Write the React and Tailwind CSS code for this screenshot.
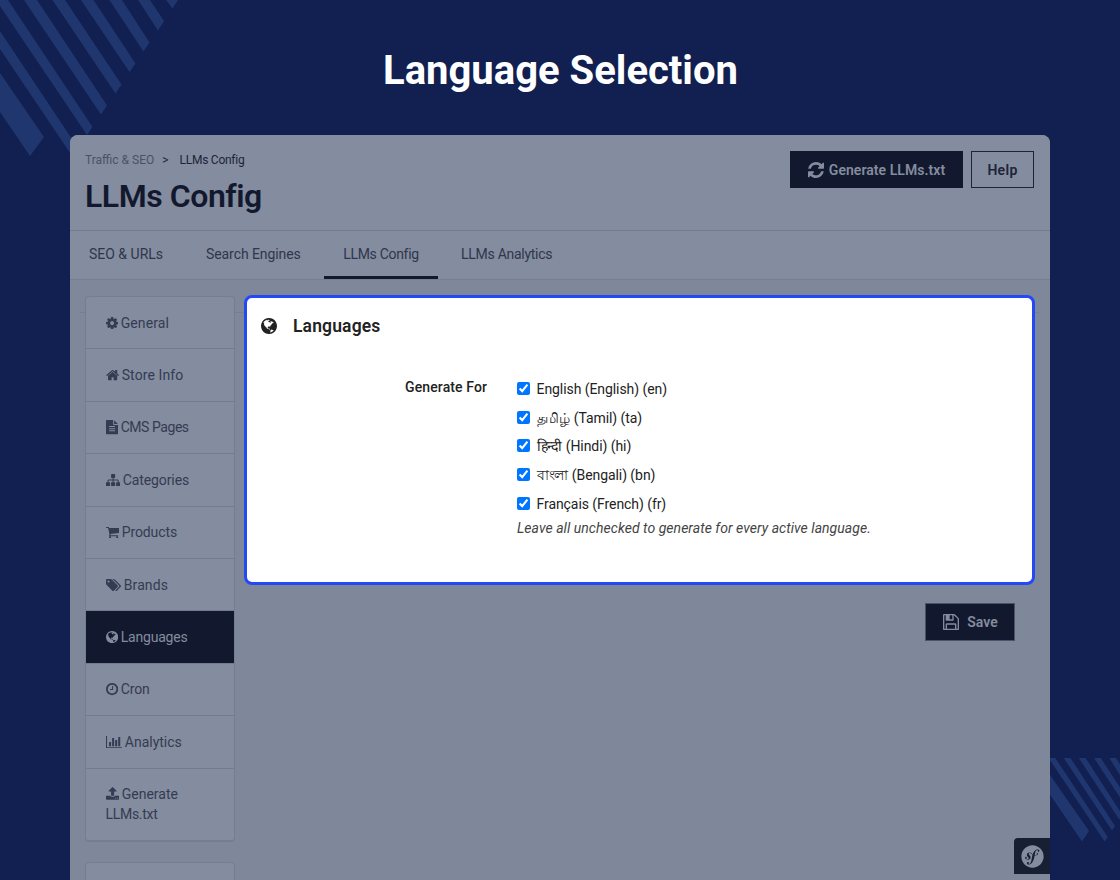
import { FaSymfony } from "react-icons/fa";

const icons = {
  cog: {
    box: [128, 128, 1536, 1536],
    d: "M1152 896q0-106-75-181t-181-75-181 75-75 181 75 181 181 75 181-75 75-181zm512-109v222q0 12-8 23t-20 13l-185 28q-19 54-39 91 35 50 107 138 10 12 10 25t-9 23q-27 37-99 108t-94 71q-12 0-26-9l-138-108q-44 23-91 38-16 136-29 186-7 28-36 28h-222q-14 0-24.5-8.5t-11.5-21.5l-28-184q-49-16-90-37l-141 107q-10 9-25 9-14 0-25-11-126-114-165-168-7-10-7-23 0-12 8-23 15-21 51-66.5t54-70.5q-27-50-41-99l-183-27q-13-2-21-12.5t-8-23.5v-222q0-12 8-23t19-13l186-28q14-46 39-92-40-57-107-138-10-12-10-24 0-10 9-23 26-36 98.5-107.5t94.5-71.5q13 0 26 10l138 107q44-23 91-38 16-136 29-186 7-28 36-28h222q14 0 24.5 8.5t11.5 21.5l28 184q49 16 90 37l142-107q9-9 24-9 13 0 25 10 129 119 165 170 7 8 7 22 0 12-8 23-15 21-51 66.5t-54 70.5q26 50 41 98l183 28q13 2 21 12.5t8 23.5z",
  },
  home: {
    box: [64, 128, 1664, 1536],
    d: "M1472 992v480q0 26-19 45t-45 19h-384v-384h-256v384h-384q-26 0-45-19t-19-45v-480q0-1 .5-3t.5-3l575-474 575 474q1 2 1 6zm223-69l-62 74q-8 9-21 11h-3q-13 0-21-7l-692-577-692 577q-12 8-24 7-13-2-21-11l-62-74q-8-10-7-23.5t11-21.5l719-599q32-26 76-26t76 26l244 204v-195q0-14 9-23t23-9h192q14 0 23 9t9 23v408l219 182q10 8 11 21.5t-7 23.5z",
  },
  file: {
    box: [128, 0, 1536, 1792],
    d: "M1596 476q14 14 28 36h-472v-472q22 14 36 28zm-476 164h544v1056q0 40-28 68t-68 28h-1344q-40 0-68-28t-28-68v-1600q0-40 28-68t68-28h800v544q0 40 28 68t68 28zm160 736v-64q0-14-9-23t-23-9h-704q-14 0-23 9t-9 23v64q0 14 9 23t23 9h704q14 0 23-9t9-23zm0-256v-64q0-14-9-23t-23-9h-704q-14 0-23 9t-9 23v64q0 14 9 23t23 9h704q14 0 23-9t9-23zm0-256v-64q0-14-9-23t-23-9h-704q-14 0-23 9t-9 23v64q0 14 9 23t23 9h704q14 0 23-9t9-23z",
  },
  sitemap: {
    box: [0, 128, 1792, 1536],
    d: "M1792 1248v320q0 40-28 68t-68 28h-320q-40 0-68-28t-28-68v-320q0-40 28-68t68-28h96v-192h-512v192h96q40 0 68 28t28 68v320q0 40-28 68t-68 28h-320q-40 0-68-28t-28-68v-320q0-40 28-68t68-28h96v-192h-512v192h96q40 0 68 28t28 68v320q0 40-28 68t-68 28h-320q-40 0-68-28t-28-68v-320q0-40 28-68t68-28h96v-192q0-52 38-90t90-38h512v-192h-96q-40 0-68-28t-28-68v-320q0-40 28-68t68-28h320q40 0 68 28t28 68v320q0 40-28 68t-68 28h-96v192h512q52 0 90 38t38 90v192h96q40 0 68 28t28 68z",
  },
  cart: {
    box: [64, 128, 1664, 1536],
    d: "M704 1536q0 52-38 90t-90 38-90-38-38-90 38-90 90-38 90 38 38 90zm896 0q0 52-38 90t-90 38-90-38-38-90 38-90 90-38 90 38 38 90zm128-1088v512q0 24-16.5 42.5t-40.5 21.5l-1044 122q13 60 13 70 0 16-24 64h920q26 0 45 19t19 45-19 45-45 19h-1024q-26 0-45-19t-19-45q0-11 8-31.5t16-36 21.5-40 15.5-29.5l-177-823h-204q-26 0-45-19t-19-45 19-45 45-19h256q16 0 28.5 6.5t19.5 15.5 13 24.5 8 26 5.5 29.5 4.5 26h1201q26 0 45 19t19 45z",
  },
  tags: {
    box: [0, 128, 1920, 1536],
    d: "M448 448q0-53-37.5-90.5t-90.5-37.5-90.5 37.5-37.5 90.5 37.5 90.5 90.5 37.5 90.5-37.5 37.5-90.5zm1067 576q0 53-37 90l-491 492q-39 37-91 37-53 0-90-37l-715-716q-38-37-64.5-101t-26.5-117v-416q0-52 38-90t90-38h416q53 0 117 26.5t102 64.5l715 714q37 39 37 91zm384 0q0 53-37 90l-491 492q-39 37-91 37-36 0-59-14t-53-45l470-470q37-37 37-90 0-52-37-91l-715-714q-38-38-102-64.5t-117-26.5h224q53 0 117 26.5t102 64.5l715 714q37 39 37 91z",
  },
  globe: {
    box: [128, 128, 1536, 1536],
    d: "M896 128q209 0 385.5 103t279.5 279.5 103 385.5-103 385.5-279.5 279.5-385.5 103-385.5-103-279.5-279.5-103-385.5 103-385.5 279.5-279.5 385.5-103zm274 521q-2 1-9.5 9.5t-13.5 9.5q2 0 4.5-5t5-11 3.5-7q6-7 22-15 14-6 52-12 34-8 51 11-2-2 9.5-13t14.5-12q3-2 15-4.5t15-7.5l2-22q-12 1-17.5-7t-6.5-21q0 2-6 8 0-7-4.5-8t-11.5 1-9 1q-10-3-15-7.5t-8-16.5-4-15q-2-5-9.5-11t-9.5-10q-1-2-2.5-5.5t-3-6.5-4-5.5-5.5-2.5-7 5-7.5 10-4.5 5q-3-2-6-1.5t-4.5 1-4.5 3-5 3.5q-3 2-8.5 3t-8.5 2q15-5-1-11-10-4-16-3 9-4 7.5-12t-8.5-14h5q-1-4-8.5-8.5t-17.5-8.5-13-6q-8-5-34-9.5t-33-.5q-5 6-4.5 10.5t4 14 3.5 12.5q1 6-5.5 13t-6.5 12q0 7 14 15.5t10 21.5q-3 8-16 16t-16 12q-5 8-1.5 18.5t10.5 16.5q2 2 1.5 4t-3.5 4.5-5.5 4-6.5 3.5l-3 2q-11 5-20.5-6t-13.5-26q-7-25-16-30-23-8-29 1-5-13-41-26-25-9-58-4 6-1 0-15-7-15-19-12 3-6 4-17.5t1-13.5q3-13 12-23 1-1 7-8.5t9.5-13.5.5-6q35 4 50-11 5-5 11.5-17t10.5-17q9-6 14-5.5t14.5 5.5 14.5 5q14 1 15.5-11t-7.5-20q12 1 3-17-4-7-8-9-12-4-27 5-8 4 2 8-1-1-9.5 10.5t-16.5 17.5-16-5q-1-1-5.5-13.5t-9.5-13.5q-8 0-16 15 3-8-11-15t-24-8q19-12-8-27-7-4-20.5-5t-19.5 4q-5 7-5.5 11.5t5 8 10.5 5.5 11.5 4 8.5 3q14 10 8 14-2 1-8.5 3.5t-11.5 4.5-6 4q-3 4 0 14t-2 14q-5-5-9-17.5t-7-16.5q7 9-25 6l-10-1q-4 0-16 2t-20.5 1-13.5-8q-4-8 0-20 1-4 4-2-4-3-11-9.5t-10-8.5q-46 15-94 41 6 1 12-1 5-2 13-6.5t10-5.5q34-14 42-7l5-5q14 16 20 25-7-4-30-1-20 6-22 12 7 12 5 18-4-3-11.5-10t-14.5-11-15-5q-16 0-22 1-146 80-235 222 7 7 12 8 4 1 5 9t2.5 11 11.5-3q9 8 3 19 1-1 44 27 19 17 21 21 3 11-10 18-1-2-9-9t-9-4q-3 5 .5 18.5t10.5 12.5q-7 0-9.5 16t-2.5 35.5-1 23.5l2 1q-3 12 5.5 34.5t21.5 19.5q-13 3 20 43 6 8 8 9 3 2 12 7.5t15 10 10 10.5q4 5 10 22.5t14 23.5q-2 6 9.5 20t10.5 23q-1 0-2.5 1t-2.5 1q3 7 15.5 14t15.5 13q1 3 2 10t3 11 8 2q2-20-24-62-15-25-17-29-3-5-5.5-15.5t-4.5-14.5q2 0 6 1.5t8.5 3.5 7.5 4 2 3q-3 7 2 17.5t12 18.5 17 19 12 13q6 6 14 19.5t0 13.5q9 0 20 10.5t17 19.5q5 8 8 26t5 24q2 7 8.5 13.5t12.5 9.5l16 8 13 7q5 2 18.5 10.5t21.5 11.5q10 4 16 4t14.5-2.5 13.5-3.5q15-2 29 15t21 21q36 19 55 11-2 1 .5 7.5t8 15.5 9 14.5 5.5 8.5q5 6 18 15t18 15q6-4 7-9-3 8 7 20t18 10q14-3 14-32-31 15-49-18 0-1-2.5-5.5t-4-8.5-2.5-8.5 0-7.5 5-3q9 0 10-3.5t-2-12.5-4-13q-1-8-11-20t-12-15q-5 9-16 8t-16-9q0 1-1.5 5.5t-1.5 6.5q-13 0-15-1 1-3 2.5-17.5t3.5-22.5q1-4 5.5-12t7.5-14.5 4-12.5-4.5-9.5-17.5-2.5q-19 1-26 20-1 3-3 10.5t-5 11.5-9 7q-7 3-24 2t-24-5q-13-8-22.5-29t-9.5-37q0-10 2.5-26.5t3-25-5.5-24.5q3-2 9-9.5t10-10.5q2-1 4.5-1.5t4.5 0 4-1.5 3-6q-1-1-4-3-3-3-4-3 7 3 28.5-1.5t27.5 1.5q15 11 22-2 0-1-2.5-9.5t-.5-13.5q5 27 29 9 3 3 15.5 5t17.5 5q3 2 7 5.5t5.5 4.5 5-.5 8.5-6.5q10 14 12 24 11 40 19 44 7 3 11 2t4.5-9.5 0-14-1.5-12.5l-1-8v-18l-1-8q-15-3-18.5-12t1.5-18.5 15-18.5q1-1 8-3.5t15.5-6.5 12.5-8q21-19 15-35 7 0 11-9-1 0-5-3t-7.5-5-4.5-2q9-5 2-16 5-3 7.5-11t7.5-10q9 12 21 2 8-8 1-16 5-7 20.5-10.5t18.5-9.5q7 2 8-2t1-12 3-12q4-5 15-9t13-5l17-11q3-4 0-4 18 2 31-11 10-11-6-20 3-6-3-9.5t-15-5.5q3-1 11.5-.5t10.5-1.5q15-10-7-16-17-5-43 12zm-163 877q206-36 351-189-3-3-12.5-4.5t-12.5-3.5q-18-7-24-8 1-7-2.5-13t-8-9-12.5-8-11-7q-2-2-7-6t-7-5.5-7.5-4.5-8.5-2-10 1l-3 1q-3 1-5.5 2.5t-5.5 3-4 3 0 2.5q-21-17-36-22-5-1-11-5.5t-10.5-7-10-1.5-11.5 7q-5 5-6 15t-2 13q-7-5 0-17.5t2-18.5q-3-6-10.5-4.5t-12 4.5-11.5 8.5-9 6.5-8.5 5.5-8.5 7.5q-3 4-6 12t-5 11q-2-4-11.5-6.5t-9.5-5.5q2 10 4 35t5 38q7 31-12 48-27 25-29 40-4 22 12 26 0 7-8 20.5t-7 21.5q0 6 2 16z",
  },
  clock: {
    box: [128, 128, 1536, 1536],
    d: "M1024 544v448q0 14-9 23t-23 9h-320q-14 0-23-9t-9-23v-64q0-14 9-23t23-9h224v-352q0-14 9-23t23-9h64q14 0 23 9t9 23zm416 352q0-148-73-273t-198-198-273-73-273 73-198 198-73 273 73 273 198 198 273 73 273-73 198-198 73-273zm224 0q0 209-103 385.5t-279.5 279.5-385.5 103-385.5-103-279.5-279.5-103-385.5 103-385.5 279.5-279.5 385.5-103 385.5 103 279.5 279.5 103 385.5z",
  },
  chart: {
    box: [0, 128, 2048, 1536],
    d: "M640 896v512h-256v-512h256zm384-512v1024h-256v-1024h256zm1024 1152v128h-2048v-1536h128v1408h1920zm-640-896v768h-256v-768h256zm384-384v1152h-256v-1152h256z",
  },
  upload: {
    box: [64, 64, 1664, 1600],
    d: "M1344 1472q0-26-19-45t-45-19-45 19-19 45 19 45 45 19 45-19 19-45zm256 0q0-26-19-45t-45-19-45 19-19 45 19 45 45 19 45-19 19-45zm128-224v320q0 40-28 68t-68 28h-1472q-40 0-68-28t-28-68v-320q0-40 28-68t68-28h427q21 56 70.5 92t110.5 36h256q61 0 110.5-36t70.5-92h427q40 0 68 28t28 68zm-325-648q-17 40-59 40h-256v448q0 26-19 45t-45 19h-256q-26 0-45-19t-19-45v-448h-256q-42 0-59-40-17-39 14-69l448-448q18-19 45-19t45 19l448 448q31 30 14 69z",
  },
  refresh: {
    box: [128, 128, 1536, 1536],
    d: "M1639 1056q0 5-1 7-64 268-268 434.5t-478 166.5q-146 0-282.5-55t-243.5-157l-129 129q-19 19-45 19t-45-19-19-45v-448q0-26 19-45t45-19h448q26 0 45 19t19 45-19 45l-137 137q71 66 161 102t187 36q134 0 250-65t186-179q11-17 53-117 8-23 30-23h192q13 0 22.5 9.5t9.5 22.5zm25-800v448q0 26-19 45t-45 19h-448q-26 0-45-19t-19-45 19-45l138-138q-148-137-349-137-134 0-250 65t-186 179q-11 17-53 117-8 23-30 23h-199q-13 0-22.5-9.5t-9.5-22.5v-7q65-268 270-434.5t480-166.5q146 0 284 55.5t245 156.5l130-129q19-19 45-19t45 19 19 45z",
  },
  save: {
    box: [128, 128, 1536, 1536],
    d: "M512 1536h768v-384h-768v384zm896 0h128v-896q0-14-10-38.5t-20-34.5l-281-281q-10-10-34-20t-39-10v416q0 40-28 68t-68 28h-576q-40 0-68-28t-28-68v-416h-128v1280h128v-416q0-40 28-68t68-28h832q40 0 68 28t28 68v416zm-384-928v-320q0-13-9.5-22.5t-22.5-9.5h-192q-13 0-22.5 9.5t-9.5 22.5v320q0 13 9.5 22.5t22.5 9.5h192q13 0 22.5-9.5t9.5-22.5zm640 32v928q0 40-28 68t-68 28h-1344q-40 0-68-28t-28-68v-1344q0-40 28-68t68-28h928q40 0 88 20t76 48l280 280q28 28 48 76t20 88z",
  },
};

// size is the width of a 1536-unit glyph
function Icon({ name, size = 12.2, className = "" }) {
  const { box, d } = icons[name];

  return (
    <svg
      viewBox={box.join(" ")}
      width={(box[2] / 1536) * size}
      height={(box[3] / 1536) * size}
      fill="currentColor"
      className={`inline-block shrink-0 ${className}`}
    >
      <path d={d} />
    </svg>
  );
}

const menu = [
  { icon: "cog", label: "General", spacing: "tracking-[0.1px]" },
  { icon: "home", label: "Store Info", spacing: "tracking-[0.1px]" },
  { icon: "file", label: "CMS Pages", spacing: "tracking-[-0.45px]" },
  { icon: "sitemap", label: "Categories", spacing: "tracking-[-0.1px]" },
  { icon: "cart", label: "Products", spacing: "tracking-[-0.1px]" },
  { icon: "tags", label: "Brands", spacing: "tracking-[0.1px]" },
  { icon: "globe", label: "Languages", spacing: "tracking-[-0.2px]", active: true },
  { icon: "clock", label: "Cron", spacing: "tracking-[-0.1px]" },
  { icon: "chart", label: "Analytics", spacing: "tracking-[0px]" },
];

const languages = [
  "English (English) (en)",
  "தமிழ் (Tamil) (ta)",
  "हिन्दी (Hindi) (hi)",
  "বাংলা (Bengali) (bn)",
  "Français (French) (fr)",
];

function Stripes() {
  return (
    <svg
      viewBox="0 0 1120 880"
      className="absolute inset-0 h-[880px] w-[1120px]"
      fill="#20366f"
    >
      <path d="M0 73L44 137L30 156L0 112z" />
      <path d="M0 31L78 148L72.500 156.500L0 49z" />
      <path d="M-4 0H8L92.500 127L87 135z" />
      <path d="M24 0H37L107 105.500L101 114.500z" />
      <path d="M52.500 0H65L121.500 84.500L115.500 93.500z" />
      <path d="M81 0H93.500L135.500 63.500L129.500 72z" />
      <path d="M109.500 0H122L149.500 42.500L143.500 51.500z" />
      <path d="M138 0H150L164 21L158 30.500z" />
      <path d="M166 0H178L172.500 8.500z" />
      <path d="M1050 775L1089 831L1082 841.500L1050 794.500z" />
      <path d="M1048.500 758H1055.300L1107.700 837L1104.700 841.500z" />
      <path d="M1063.700 758H1070.500L1115 826L1112 830.500z" />
      <path d="M1078.800 758H1085.600L1122.500 815L1119.300 819.500z" />
      <path d="M1094 758H1100.800L1130 803L1127 808z" />
      <path d="M1109.200 758H1116L1138 792L1134 797z" />
    </svg>
  );
}

export default function App() {
  return (
    <div className="relative h-[880px] w-[1120px] overflow-hidden bg-[#112050] font-['Roboto',sans-serif] text-[14px]">
      <Stripes />

      <div className="relative flex h-full flex-col px-[70px]">
        <h1 className="flex h-[135px] shrink-0 items-center justify-center pl-px pt-[7px] text-[40px] font-bold text-white">
          Language Selection
        </h1>

        <div className="relative flex flex-1 flex-col overflow-hidden rounded-t-lg bg-[#7f879a]">
          <header className="flex h-[96px] shrink-0 justify-between border-b border-[#727b90] bg-[#848c9f] pl-[15px] pr-[16px] pt-4">
            <div>
              <div className="flex h-[17px] items-center text-[12px] text-[#1d2439]">
                <span className="text-[#4a5269]">Traffic &amp; SEO</span>
                <span className="ml-2 mr-[11px]">&gt;</span>
                <span className="tracking-[-0.25px]">LLMs Config</span>
              </div>
              <h2 className="mt-[8px] text-[32px] font-semibold leading-[40px] tracking-[-0.45px] text-[#12192e]">
                LLMs Config
              </h2>
            </div>

            <div className="flex h-[37px] gap-2 font-semibold">
              <button className="flex w-[173px] items-center justify-center gap-[5px] bg-[#12192e] pt-px tracking-[0.05px] text-[#848c9f]">
                <Icon name="refresh" size={16} className="-mt-px" />
                Generate LLMs.txt
              </button>
              <button className="w-[63px] border border-[#1d2439] pt-px tracking-[0.3px] text-[#1d2439]">
                Help
              </button>
            </div>
          </header>

          <nav className="flex h-[49px] shrink-0 border-b border-[#757e92] bg-[#848c9f] text-[#2f364c]">
            <a className="flex w-[117px] items-center pb-[2px] pl-[19px]">SEO &amp; URLs</a>
            <a className="flex w-[137px] items-center pb-[2px] pl-[19px] tracking-[-0.08px]">
              Search Engines
            </a>
            <a className="flex w-[114px] items-center justify-center border-b-[3px] border-[#12192e] pt-px tracking-[-0.3px]">
              LLMs Config
            </a>
            <a className="flex items-center pb-[2px] pl-[23px] tracking-[-0.27px]">
              LLMs Analytics
            </a>
          </nav>

          <div className="relative flex flex-1 gap-[9px] pl-[15px] pt-[15px]">
            <div className="absolute left-[10px] right-[11px] top-[32px] h-px bg-[#757e92]" />

            <aside className="relative w-[150px] shrink-0">
              <ul className="mt-px overflow-hidden rounded border border-b-2 border-[#747d91] bg-[#848c9f] text-[#343b52]">
                {menu.map((item) => (
                  <li
                    key={item.label}
                    className={`flex h-[52.4px] items-center border-b border-[#727b8f] pl-[19.5px] pt-px ${
                      item.active ? "bg-[#12192e] text-[#848c9f]" : ""
                    }`}
                  >
                    <Icon name={item.icon} className="-mt-px mr-[3px]" />
                    <span className={item.spacing}>{item.label}</span>
                  </li>
                ))}
                <li className="h-[71px] pl-[19.5px] pt-[15px] leading-5">
                  <Icon name="upload" className="mr-[3px] align-[-1px]" />
                  Generate
                  <br />
                  <span className="tracking-[-0.3px]">LLMs.txt</span>
                </li>
              </ul>
              <div className="mt-5 h-10 rounded border border-[#747d91] bg-[#848c9f]" />
            </aside>

            <main className="relative w-[791px]">
              <section className="h-[290px] rounded-lg border-[3px] border-[#2348f5] bg-white text-[#222]">
                <h3 className="flex items-center pl-[14px] pt-[16px] text-[17.5px] font-semibold leading-6 tracking-[0.15px]">
                  <Icon name="globe" size={16} className="-mt-px mr-4" />
                  Languages
                </h3>

                <div className="mt-[39px] flex">
                  <div className="w-[240px] text-right font-medium leading-5 tracking-[0.1px]">
                    Generate For
                  </div>
                  <div className="ml-[30px]">
                    {languages.map((language) => (
                      <label
                        key={language}
                        className="flex h-[28.7px] items-start text-[14px] leading-[24px] tracking-[-0.07px]"
                      >
                        <input
                          type="checkbox"
                          defaultChecked
                          className="mr-[6.5px] mt-[5px] h-[13px] w-[13px]"
                        />
                        {language}
                      </label>
                    ))}
                    <p className="mt-[-2px] italic leading-5 tracking-[0.04px] text-[#444]">
                      Leave all unchecked to generate for every active language.
                    </p>
                  </div>
                </div>
              </section>

              <div className="mt-[18px] flex justify-end pr-5">
                <button className="flex h-[38px] w-[90px] items-center justify-center gap-2 border border-[#4b5368] bg-[#12192e] pl-px font-semibold text-[#848c9f]">
                  <Icon name="save" size={16} />
                  Save
                </button>
              </div>
            </main>
          </div>

          <div className="absolute bottom-[6px] right-0 flex h-9 w-9 items-center justify-center rounded-tl bg-[#161f33] text-[#848c9f]">
            <FaSymfony size={23} />
          </div>
        </div>
      </div>
    </div>
  );
}
